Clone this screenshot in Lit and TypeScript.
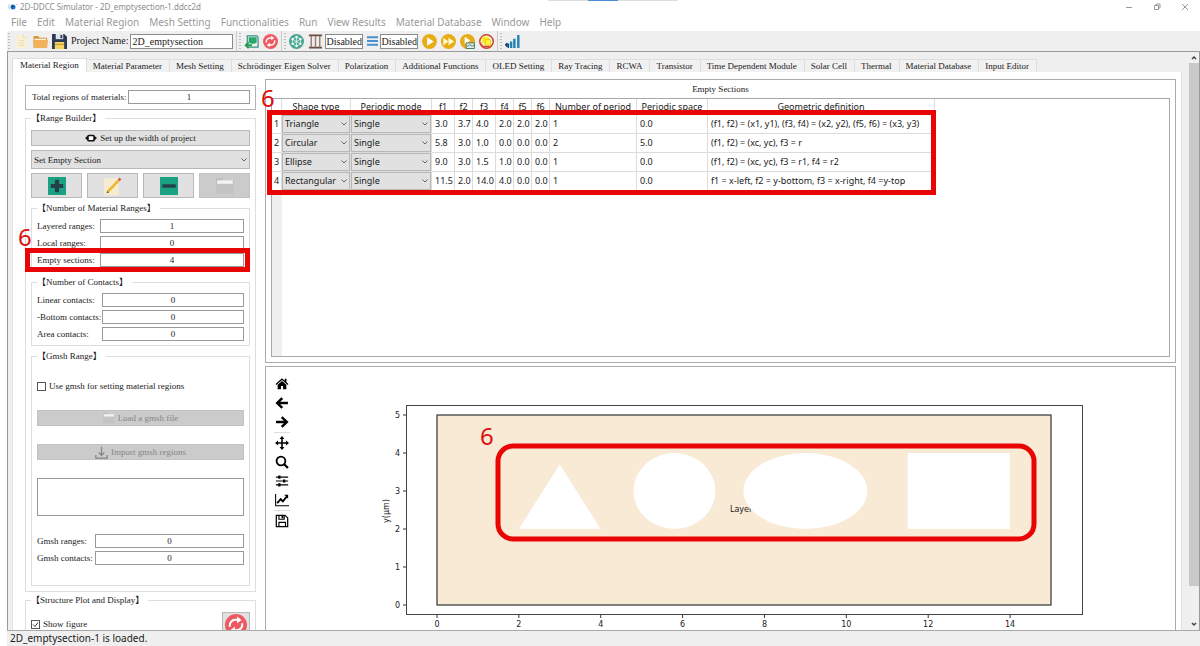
import { LitElement, html, svg, css } from "lit";
import { customElement } from "lit/decorators.js";
import { classMap } from "lit/directives/class-map.js";

const MENUS = ["File", "Edit", "Material Region", "Mesh Setting", "Functionalities", "Run", "View Results", "Material Database", "Window", "Help"];
const TABS = ["Material Region", "Material Parameter", "Mesh Setting", "Schrödinger Eigen Solver", "Polarization", "Additional Functions", "OLED Setting", "Ray Tracing", "RCWA", "Transistor", "Time Dependent Module", "Solar Cell", "Thermal", "Material Database", "Input Editor"];
const COLUMNS = ["Shape type", "Periodic mode", "f1", "f2", "f3", "f4", "f5", "f6", "Number of period", "Periodic space", "Geometric definition"];
const ROWS = [
  ["Triangle", "Single", "3.0", "3.7", "4.0", "2.0", "2.0", "2.0", "1", "0.0", "(f1, f2) = (x1, y1), (f3, f4) = (x2, y2), (f5, f6) = (x3, y3)"],
  ["Circular", "Single", "5.8", "3.0", "1.0", "0.0", "0.0", "0.0", "2", "5.0", "(f1, f2) = (xc, yc), f3 = r"],
  ["Ellipse", "Single", "9.0", "3.0", "1.5", "1.0", "0.0", "0.0", "1", "0.0", "(f1, f2) = (xc, yc), f3 = r1, f4 = r2"],
  ["Rectangular", "Single", "11.5", "2.0", "14.0", "4.0", "0.0", "0.0", "1", "0.0", "f1 = x-left, f2 = y-bottom, f3 = x-right, f4 =y-top"],
];

const icon = (name: string, body: unknown) =>
  html`<svg class="icon ${name}" viewBox="0 0 16 16" aria-hidden="true">${body}</svg>`;

const refreshArrows = svg`
  <circle cx="8" cy="8" r="8" fill="#ee5a62"/>
  <path d="M3.6 9.2a4 4 0 0 1 4-5h1.6M12.4 6.8a4 4 0 0 1-4 5H6.8" fill="none" stroke="#fff" stroke-width="1.5"/>
  <path d="M8.8 1.9l3.2 2.4-3.2 2.4zM7.2 9.3L4 11.7l3.2 2.4z" fill="#fff"/>`;

const ICONS = {
  app: svg`<circle cx="8" cy="8" r="4" fill="#1d6fc4"/><circle cx="7" cy="7" r="1.6" fill="#0b3f80"/><path d="M2.5 3.5A8 8 0 0 0 2.5 12" fill="none" stroke="#b9dcd2" stroke-width="2"/><path d="M13 3l1.5 1.5" stroke="#e88" stroke-width="1.6"/>`,
  page: svg`<path d="M3 1h7l3 3v11H3z" fill="#fbf0d2"/><path d="M10 1v3h3M5 7h6M5 9.500h6M5 12h6" fill="none" stroke="#e6dcbc"/>`,
  folder: svg`<path d="M.5 2h5l1.500 2h8v10.500H.5z" fill="#d9963a"/><path d="M1.500 5h12.500v2H1.500z" fill="#fdf0d8"/><path d="M.5 6.500h15.500l-1 8.500H1z" fill="#f0b35c"/>`,
  floppy: svg`<path d="M0 0h13l3 3v13H0z" fill="#2d3a52"/><path d="M4 0h8v5.500H4z" fill="#dfe6ee"/><path d="M9 1h2v3.500H9z" fill="#2d3a52"/><path d="M3 8.500h10V16H3z" fill="#f6d463"/><path d="M3 11h10" stroke="#b8942e"/>`,
  board: svg`<path d="M3.500 2h9.500q2 0 2 2v10H3.500z" fill="#e3f3ee" stroke="#3f8d86" stroke-width="1.300"/><path d="M5 3.500h8.500V9q-4 3-8.500 0z" fill="#29a86b"/><path d="M8.500 12H2.500M5 9L1.800 12 5 15" fill="none" stroke="#279c50" stroke-width="2"/>`,
  refresh: refreshArrows,
  mesh: svg`<circle cx="8" cy="8" r="8" fill="#4aa592"/><path d="M8 3v10M3.700 5.500L8 8l4.300-2.500M3.700 10.500L8 8l4.300 2.500M8 3l4.300 2.500v5L8 13l-4.300-2.500v-5z" stroke="#d8f1ea" stroke-width=".9" fill="none"/><circle cx="8" cy="3" r="1.200" fill="#fff"/><circle cx="8" cy="13" r="1.200" fill="#fff"/><circle cx="3.700" cy="5.500" r="1.200" fill="#fff"/><circle cx="12.300" cy="5.500" r="1.200" fill="#fff"/><circle cx="3.700" cy="10.500" r="1.200" fill="#fff"/><circle cx="12.300" cy="10.500" r="1.200" fill="#fff"/>`,
  pillars: svg`<path d="M1 1.500h14M1 14.500h14" stroke="#6a4a42" stroke-width="2"/><path d="M3.500 2v12M8 2v12M12.500 2v12" stroke="#9a8078" stroke-width="1.600"/>`,
  lines: svg`<path d="M0 2.500h16M0 8h16M0 13.500h16" stroke="#4a8fd0" stroke-width="3"/>`,
  play: svg`<circle cx="8" cy="8" r="8" fill="#e8ac16"/><path d="M5.500 3.500L12.500 8l-7 4.500z" fill="#fff"/>`,
  forward: svg`<circle cx="8" cy="8" r="8" fill="#e8ac16"/><path d="M2.500 4L8 8l-5.500 4zM8 4l6 4-6 4z" fill="#fffbd0"/>`,
  playSave: svg`<circle cx="8" cy="8" r="8" fill="#e8ac16"/><path d="M5 3l6 4-6 4z" fill="#fff"/><path d="M6.500 9.500h9v6h-9z" fill="#dfe9e4" stroke="#4d7466"/><path d="M7 13.500l3-2 3 1.500 2-1" fill="none" stroke="#3c8f6a"/>`,
  stop: svg`<circle cx="8" cy="8" r="7.200" fill="#fff" stroke="#c9432b" stroke-width="1.600"/><path d="M3 3h8v7H3z" fill="#ffe81c"/><path d="M1.300 8.500A7 7 0 0 0 14.500 10L12 12.500H5z" fill="#d0392b"/><path d="M6.500 6h6v6h-6z" fill="#fff23a" stroke="#e9c21c"/>`,
  chart: svg`<path d="M6.500 8v7M10 5v10M14.200 1v14" stroke="#2182b4" stroke-width="2.600"/><path d="M0 11.500h4.500M2.500 9.500L.5 11.500l2 2M3.500 10v5" fill="none" stroke="#1c4c78" stroke-width="1.500"/>`,
  width: svg`<rect x="4" y="4.500" width="8" height="7" rx="1" fill="#fff" stroke="#111" stroke-width="2"/><path d="M4 4.500L0 8l4 3.500zM12 4.500L16 8l-4 3.500z" fill="#111"/>`,
  add: svg`<path d="M0 0h16v16H0z" fill="#1aa182"/><path d="M8 2.500v11M2.500 8h11" stroke="#23404a" stroke-width="3.600"/>`,
  pencil: svg`<path d="M0 1h13v15H0z" fill="#f6ecd0"/><path d="M3.500 13L13 3" stroke="#e9b92a" stroke-width="2.400"/><path d="M13 3l1.600-1.700" stroke="#dd5a50" stroke-width="2.400"/><path d="M2.300 14.500l.5-2.300 1.700 1.700z" fill="#555"/>`,
  remove: svg`<path d="M0 0h16v16H0z" fill="#1aa182"/><path d="M2 8h12" stroke="#23404a" stroke-width="3"/>`,
  folderOff: svg`<path d="M0 1h5l1.500 2H16v12H0z" fill="#bdbdbd"/><path d="M1 3h14v5H1z" fill="#f4f4f4"/><path d="M0 6h16v9H0z" fill="#c4c4c4"/>`,
  import: svg`<path d="M8 1v10M4.500 8L8 11.500 11.500 8M1 11v4h14v-4" fill="none" stroke="#858585" stroke-width="1.500"/>`,
  home: svg`<path d="M8 1.500L.6 8l.9 1L8 3.400 14.500 9l.9-1-2.300-2V2h-2v2.200z" fill="#000"/><path d="M8 4.600l-5 4.200V14h3.800v-3.800h2.400V14H13V8.800z" fill="#000"/>`,
  back: svg`<path d="M14.800 8H3M8.300 2.300L2.500 8l5.800 5.700" fill="none" stroke="#000" stroke-width="2.800"/>`,
  next: svg`<path d="M1.200 8H13M7.700 2.300L13.500 8l-5.800 5.700" fill="none" stroke="#000" stroke-width="2.800"/>`,
  pan: svg`<path d="M8 2v12M2 8h12" stroke="#000" stroke-width="1.800"/><path d="M8 0l2.800 3.500H5.200zM8 16l2.800-3.500H5.200zM0 8l3.500-2.800v5.600zM16 8l-3.500-2.800v5.600z"/>`,
  zoom: svg`<circle cx="6.800" cy="6.800" r="5" fill="none" stroke="#000" stroke-width="2.100"/><path d="M10.500 10.500l4.300 4.300" stroke="#000" stroke-width="2.600"/>`,
  sliders: svg`<path d="M1 3.500h14M1 8h14M1 12.500h14" stroke="#000" stroke-width="1.300"/><path d="M5 1.700v3.600M10.500 6.200v3.600M5 10.700v3.600" stroke="#000" stroke-width="2.600"/>`,
  axes: svg`<path d="M.7 1v13.500H16" fill="none" stroke="#000" stroke-width="1.200"/><path d="M2.500 11.500L6.500 7l2.500 2.500L13.500 4" fill="none" stroke="#000" stroke-width="2.200"/><path d="M10.500 2H15v4.500z"/>`,
  save: svg`<path d="M1.500 1.500h10l3 3v10h-13z" fill="none" stroke="#000" stroke-width="1.400"/><path d="M4.500 1.500V6h6V1.500M4.500 14V9.500h7.500V14" fill="none" stroke="#000" stroke-width="1.300"/><path d="M7.500 2h2v3h-2z"/>`,
};

const count = (id: string, label: string, value: string) => html`
  <label for=${id}>${label}</label><input class="num" id=${id} .value=${value} />`;

/* Data-to-pixel scales of the structure plot. */
const px = (v: number) => 137 + (v * 614) / 15;
const py = (v: number) => 238 - v * 38;

@customElement("structure-plot")
class StructurePlot extends LitElement {
  static styles = css`
    :host { display: block; flex: 1; min-width: 0; }
    .plot { display: block; width: 100%; }
    .tick { font: 8px "DejaVu Sans", sans-serif; fill: #222; }
    .mark { font: 24px "Noto Sans", sans-serif; fill: #e00f0f; }
  `;
  render() {
    return html`<svg class="plot" viewBox="0 0 875 263" preserveAspectRatio="xMinYMin meet" role="img" aria-label="Structure">
      <rect x="106.500" y="38.500" width="676" height="209" fill="#fff" stroke="#444"/>
      <rect x=${px(0)} y=${py(5)} width="614" height="190" fill="#f9ead6" stroke="#333" stroke-width="1.200"/>
      <text class="tick" x="430" y="145">Layer</text>
      <g fill="#fff">
        <path d="M${px(3)} ${py(3.7)}L${px(4)} ${py(2)}H${px(2)}z"/>
        <ellipse cx=${px(5.8)} cy=${py(3)} rx="41" ry="38"/>
        <ellipse cx=${px(9)} cy=${py(3)} rx="62" ry="38"/>
        <rect x=${px(11.5)} y=${py(4)} width="102" height="76"/>
      </g>
      ${[0, 1, 2, 3, 4, 5].map((v) => svg`<path d="M103 ${py(v)}h3" stroke="#333"/><text class="tick" text-anchor="end" x="100" y=${py(v) + 3}>${v}</text>`)}
      ${[0, 2, 4, 6, 8, 10, 12, 14].map((v) => svg`<path d="M${px(v)} 248v3" stroke="#333"/><text class="tick" text-anchor="middle" x=${px(v)} y="260">${v}</text>`)}
      <text class="tick" text-anchor="middle" transform="translate(89 144) rotate(-90)">y(µm)</text>
      <rect x="198" y="79" width="536" height="93" rx="15" fill="none" stroke="#ea0505" stroke-width="5"/>
      <text class="mark" x="180" y="78">6</text>
    </svg>`;
  }
}

@customElement("app-root")
class AppRoot extends LitElement {
  static styles = css`
    :host {
      display: grid; grid-template-rows: 14px 17px 20px minmax(0, 1fr) 16px; height: 100vh;
      background: #fff; color: #1a1a1a; overflow: hidden; position: relative;
      font: 9px/12px "Liberation Serif", "Noto Sans CJK TC", serif;
    }
    * { box-sizing: border-box; }
    button, input, select, textarea { font: inherit; color: inherit; margin: 0; border-radius: 0; }
    button { padding: 0; border: 0; background: none; display: flex; align-items: center; justify-content: center; }
    .icon { width: 15px; height: 15px; flex: none; display: block; }
    .titlebar { display: flex; align-items: center; padding: 0 11px 0 8px; gap: 2px; color: #8c8c8c; font: 8px/14px "Noto Sans", sans-serif; }
    .titlebar .icon { width: 10px; height: 10px; }
    .controls { margin-left: auto; display: flex; gap: 20px; }
    .controls svg { width: 8px; height: 8px; fill: none; stroke: #999; display: block; }
    .notch { position: absolute; top: 0; left: 50%; width: 130px; margin-left: -52px; height: 1px; background: linear-gradient(90deg, #ddd 40px, #4c8fd8 40px 70px, #ddd 70px); }
    .menu { display: flex; gap: 10px; padding-left: 11px; font: 10px/17px "Noto Sans", sans-serif; color: #999; }
    .menu button { color: inherit; }
    .toolbar { margin-left: 7px; padding: 0 1px; display: flex; align-items: center; gap: 4px; background: #efefef; font-size: 10px; }
    .handle { width: 2px; height: 16px; background: repeating-linear-gradient(#bbb 0 1px, transparent 1px 3px); flex: none; }
    .split { margin: 0 -1px; border-left: 1px solid #ccc; width: 5px; height: 20px; flex: none; display: flex; align-items: center; justify-content: flex-end; }
    .toolbar input { height: 15px; border: 1px solid #8c8c8c; background: #fff; padding: 0; }
    .toolbar .lines { width: 11px; height: 12px; }
    .toolbar .name { width: 103px; padding: 0 1px; }
    .state { width: 38px; }
    .field { display: flex; align-items: center; gap: 2px; }
    .body { margin-left: 7px; border: 1px solid #9a9a9a; border-width: 1px 1px 0 1px; background: #efefef; display: grid; grid-template-columns: minmax(0, 1fr) 10px; min-height: 0; overflow: hidden; }
    .work { padding: 6px 7px 0 4px; display: flex; flex-direction: column; min-height: 0; min-width: 0; }
    .tabs { display: flex; align-items: flex-end; height: 14px; flex: none; }
    .tab { height: 13px; padding: 0 7px 1px 6px; border: 1px solid #dedede; border-width: 1px 1px 0 0; background: #f1f1f1; white-space: nowrap; }
    .tab.on { height: 14px; padding: 0 7px 1px; background: #fff; border-left-width: 1px; }
    .pane { flex: 1; min-height: 0; background: #fff; border: 1px solid #e2e2e2; border-width: 0 1px; padding: 0 5px 0 12px; display: flex; gap: 9px; overflow: hidden; }
    .side { width: 231px; flex: none; padding-top: 13px; display: flex; flex-direction: column; gap: 2px; }
    fieldset { margin: 0; min-width: 0; padding: 0; border: 1px solid #dedede; }
    .outer { padding: 6px 5px 5px; }
    .inner { padding: 5px 5px 4px; }
    legend { padding: 0 4px 0 0; line-height: 12px; height: 12px; }
    .stack { display: flex; flex-direction: column; gap: 4px; }
    .total { border: 1px solid #b4b4b4; padding: 4px 5px 5px 6px; display: grid; grid-template-columns: 96px 1fr; align-items: center; }
    .num { width: 100%; height: 14px; border: 1px solid #9a9a9a; background: #fff; text-align: center; padding: 0; }
    .push { height: 16px; gap: 3px; background: #e1e1e1; border: 1px solid #b8b8b8; width: 100%; }
    .push .icon { width: 12px; height: 12px; }
    .push:disabled { background: #cbcbcb; color: #858585; border-color: #c2c2c2; }
    .push .import { width: 13px; height: 13px; }
    select { appearance: none; width: 100%; border: 1px solid #b8b8b8; background: #e1e1e1 url("data:image/svg+xml,%3Csvg xmlns='http://www.w3.org/2000/svg' width='6' height='4'%3E%3Cpath d='M.5 .5L3 3L5.500 .5' fill='none' stroke='%23666'/%3E%3C/svg%3E") no-repeat right 2px center; padding: 0 10px 0 2px; }
    .kind { height: 19px; }
    .tools { display: grid; grid-template-columns: repeat(4, 1fr); gap: 5px; }
    .tools .push { height: 25px; }
    .tools .icon { width: 18px; height: 18px; }
    .counts { display: grid; gap: 3px 0; align-items: center; white-space: nowrap; }
    .ranges { grid-template-columns: 63px 1fr; }
    .contacts { grid-template-columns: 65px 1fr; }
    .gmsh { grid-template-columns: 58px 1fr; }
    .marked { position: relative; grid-column: 1 / -1; display: grid; grid-template-columns: subgrid; align-items: center; }
    .frame { position: absolute; border: 5px solid #ea0505; pointer-events: none; }
    .six { position: absolute; font: 24px/24px "Noto Sans", sans-serif; color: #e00f0f; pointer-events: none; }
    .marked .frame { inset: -5px -6px -5px -12px; }
    .marked .six { left: -19px; top: -28px; }
    .loader { display: flex; flex-direction: column; gap: 18px; padding: 13px 0 16px; }
    .check { display: flex; align-items: center; gap: 3px; }
    .check input { appearance: none; width: 9px; height: 9px; border: 1px solid #555; background: #fff; }
    .check input:checked { background: url("data:image/svg+xml,%3Csvg xmlns='http://www.w3.org/2000/svg' width='7' height='7'%3E%3Cpath d='M1 3.500L3 5.500L6 1.500' fill='none' stroke='%23333'/%3E%3C/svg%3E"); }
    .loader textarea { display: block; width: 100%; height: 38px; resize: none; border: 1px solid #9a9a9a; background: #fff; }
    .display { display: flex; justify-content: space-between; align-items: flex-start; }
    .display .check { padding-top: 6px; }
    .redraw { width: 28px; height: 26px; background: #e1e1e1; border: 1px solid #b8b8b8; }
    .redraw .icon { width: 22px; height: 22px; }
    .main { flex: 1; min-width: 0; padding-top: 7px; display: flex; flex-direction: column; gap: 3px; }
    .card { border: 1px solid #ababab; background: #fff; }
    .sections { padding: 0 5px 5px; }
    .heading { margin: 0; font: inherit; line-height: 18px; text-align: center; }
    .grid { position: relative; height: 259px; border: 1px solid #a8a8a8; background: linear-gradient(90deg, #efefef 10px, #fff 10px); }
    table { border-collapse: separate; border-spacing: 0; table-layout: fixed; width: 663px; background: #fff; font: 9px/12px "Noto Sans", sans-serif; }
    th, td { padding: 0 0 0 3px; border: 0 solid #dcdcdc; border-width: 0 1px 1px 0; overflow: hidden; white-space: nowrap; text-align: left; font-weight: 400; }
    thead th { height: 16px; text-align: center; padding: 0; }
    tbody td, tbody th { height: 19px; }
    tbody th { padding: 0; text-align: center; }
    tbody .pick { padding: 0; }
    .pick select { height: 18px; display: block; }
    .w10 { width: 10px; } .w18 { width: 18px; } .w23 { width: 23px; } .w69 { width: 69px; }
    .w71 { width: 71px; } .w81 { width: 81px; } .w87 { width: 87px; }
    .grid .frame { left: -5px; top: 11px; width: 669px; height: 85px; }
    .grid .six { left: -11px; top: -13px; }
    .figure { flex: 1; display: flex; min-height: 0; overflow: hidden; border-bottom: 0; }
    .nav { width: 34px; flex: none; padding: 8px 0 0 8px; display: flex; flex-direction: column; gap: 1px; }
    .nav button { width: 16px; height: 18px; }
    .nav .icon { width: 14px; height: 14px; }
    .nav hr { width: 16px; margin: 0; border: 0; height: 1px; background: #ddd; flex: none; }
    .scroll { display: flex; flex-direction: column; align-items: center; background: #f0f0f0; padding: 3px 0; gap: 2px; }
    .scroll svg { width: 6px; height: 6px; fill: none; stroke: #444; stroke-width: 1.500; }
    .track { flex: 1; width: 100%; display: flex; flex-direction: column; }
    .thumb { height: 94%; background: #c9c9c9; }
    .status { margin-left: 7px; border-top: 1px solid #a8a8a8; padding-left: 3px; background: #efefef; font: 10px/15px "Noto Sans", sans-serif; }
  `;

  render() {
    const tool = (name: keyof typeof ICONS, label: string) => html`<button aria-label=${label}>${icon(name, ICONS[name])}</button>`;
    const split = html`<span class="split"><i class="handle"></i></span>`;
    const pick = (value: string, label: string) => html`<select aria-label=${label}><option>${value}</option></select>`;
    return html`
      <header class="titlebar">
        ${icon("app", ICONS.app)}<span>2D-DDCC Simulator - 2D_emptysection-1.ddcc2d</span>
        <span class="controls">
          <button aria-label="Minimize"><svg viewBox="0 0 8 8"><path d="M1 4.500h6"/></svg></button>
          <button aria-label="Restore"><svg viewBox="0 0 8 8"><path d="M1.500 2.500h4v4h-4zM3 2.500V1h4v4H5.500"/></svg></button>
          <button aria-label="Close"><svg viewBox="0 0 8 8"><path d="M1 1l6 6M7 1L1 7"/></svg></button>
        </span>
      </header>
      <i class="notch"></i>
      <nav class="menu">${MENUS.map((m) => html`<button>${m}</button>`)}</nav>
      <div class="toolbar">
        <i class="handle"></i>
        ${tool("page", "New")}${tool("folder", "Open")}${tool("floppy", "Save")}
        <span class="field"><label for="project">Project Name:</label><input id="project" class="name" .value=${"2D_emptysection"} /></span>
        ${split}${tool("board", "Load figure")}${tool("refresh", "Refresh")}
        ${split}${tool("mesh", "Mesh")}
        <span class="field">${tool("pillars", "Pillars")}<input class="state" aria-label="Pillars state" .value=${"Disabled"} /></span>
        <span class="field">${tool("lines", "Layers")}<input class="state" aria-label="Layers state" .value=${"Disabled"} /></span>
        ${tool("play", "Run")}${tool("forward", "Run all")}${tool("playSave", "Run and plot")}${tool("stop", "Stop")}
        ${split}${tool("chart", "Chart")}
      </div>
      <div class="body">
        <div class="work">
          <div class="tabs" role="tablist">
            ${TABS.map((t, i) => html`<button role="tab" class=${classMap({ tab: true, on: i === 0 })}>${t}</button>`)}
          </div>
          <div class="pane">
            <section class="side">
              <div class="total">${count("total", "Total regions of materials:", "1")}</div>
              <fieldset class="outer">
                <legend>【Range Builder】</legend>
                <div class="stack">
                  <button class="push">${icon("width", ICONS.width)}Set up the width of project</button>
                  <select class="kind" aria-label="Range kind"><option>Set Empty Section</option></select>
                  <div class="tools">
                    <button class="push" aria-label="Add">${icon("add", ICONS.add)}</button>
                    <button class="push" aria-label="Edit">${icon("pencil", ICONS.pencil)}</button>
                    <button class="push" aria-label="Remove">${icon("remove", ICONS.remove)}</button>
                    <button class="push" aria-label="Open" disabled>${icon("folderOff", ICONS.folderOff)}</button>
                  </div>
                  <fieldset class="inner">
                    <legend>【Number of Material Ranges】</legend>
                    <div class="counts ranges">
                      ${count("layered", "Layered ranges:", "1")}${count("local", "Local ranges:", "0")}
                      <div class="marked">${count("empty", "Empty sections:", "4")}<i class="frame"></i><span class="six">6</span></div>
                    </div>
                  </fieldset>
                  <fieldset class="inner">
                    <legend>【Number of Contacts】</legend>
                    <div class="counts contacts">
                      ${count("linear", "Linear contacts:", "0")}${count("bottom", "-Bottom contacts:", "0")}${count("area", "Area contacts:", "0")}
                    </div>
                  </fieldset>
                  <fieldset class="inner">
                    <legend>【Gmsh Range】</legend>
                    <div class="loader">
                      <label class="check"><input type="checkbox" />Use gmsh for setting material regions</label>
                      <button class="push" disabled>${icon("folderOff", ICONS.folderOff)}Load a gmsh file</button>
                      <button class="push" disabled>${icon("import", ICONS.import)}Import gmsh regions</button>
                      <textarea aria-label="Gmsh log"></textarea>
                      <div class="counts gmsh">${count("granges", "Gmsh ranges:", "0")}${count("gcontacts", "Gmsh contacts:", "0")}</div>
                    </div>
                  </fieldset>
                </div>
              </fieldset>
              <fieldset class="outer">
                <legend>【Structure Plot and Display】</legend>
                <div class="display">
                  <label class="check"><input type="checkbox" checked />Show figure</label>
                  <button class="redraw" aria-label="Redraw">${icon("refresh", ICONS.refresh)}</button>
                </div>
              </fieldset>
            </section>
            <section class="main">
              <div class="card sections">
                <h2 class="heading">Empty Sections</h2>
                <div class="grid">
                  <table>
                    <colgroup>
                      <col class="w10"><col class="w69"><col class="w81"><col class="w23"><col class="w18"><col class="w23"><col class="w18"><col class="w18"><col class="w18"><col class="w87"><col class="w71"><col>
                    </colgroup>
                    <thead><tr><th></th>${COLUMNS.map((c) => html`<th scope="col">${c}</th>`)}</tr></thead>
                    <tbody>
                      ${ROWS.map((r, i) => html`<tr><th scope="row">${i + 1}</th>${r.map((v, c) =>
                        c < 2 ? html`<td class="pick">${pick(v, COLUMNS[c])}</td>` : html`<td>${v}</td>`)}</tr>`)}
                    </tbody>
                  </table>
                  <i class="frame"></i><span class="six">6</span>
                </div>
              </div>
              <div class="card figure">
                <div class="nav">
                  ${tool("home", "Home")}${tool("back", "Back")}${tool("next", "Forward")}<hr>
                  ${tool("pan", "Pan")}${tool("zoom", "Zoom")}${tool("sliders", "Subplots")}${tool("axes", "Axes")}<hr>
                  ${tool("save", "Save figure")}
                </div>
                <structure-plot></structure-plot>
              </div>
            </section>
          </div>
        </div>
        <div class="scroll">
          <svg viewBox="0 0 6 6"><path d="M1 4l2-2 2 2"/></svg>
          <div class="track"><div class="thumb"></div></div>
          <svg viewBox="0 0 6 6"><path d="M1 2l2 2 2-2"/></svg>
        </div>
      </div>
      <footer class="status">2D_emptysection-1 is loaded.</footer>
    `;
  }
}
